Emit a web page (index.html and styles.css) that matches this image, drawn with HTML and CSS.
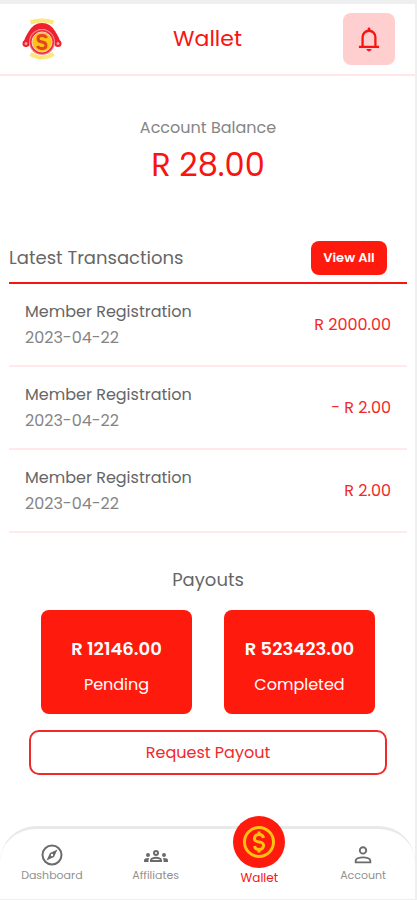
FILE: index.html
```html
<!DOCTYPE html>
<html lang="en">
<head>
<meta charset="utf-8">
<meta name="viewport" content="width=device-width, initial-scale=1">
<title>Wallet</title>
<link rel="stylesheet" href="styles.css">
</head>
<body>
<div class="app">
  <header class="topbar">
    <svg class="logo" viewBox="0 0 40 44" aria-hidden="true">
      <path d="M8.500 5.500q11.500-4 23 0M8.500 37q11.500 7 23 0" fill="none" stroke="#fbe77c" stroke-width="4"/>
      <path d="M4 27Q6 21 9 16.500Q13 9 20 9T31 16.500Q34 21 36 27" fill="none" stroke="#f0202e" stroke-width="6"/>
      <circle cx="4" cy="26.500" r="2.500" fill="#f9a0a8" stroke="#f0202e" stroke-width="2"/>
      <circle cx="36" cy="26.500" r="2.500" fill="#f9a0a8" stroke="#f0202e" stroke-width="2"/>
      <circle cx="20" cy="25" r="13" fill="#f58a90"/>
      <circle cx="20" cy="25" r="12" fill="#f0303a"/>
      <circle cx="20" cy="25" r="10" fill="#ffc414" stroke="#ffd0c4" stroke-width="1"/>
      <path d="M24.500 21q-1-2.500-4.500-2.500q-4 0-4 3t4 3.500t4 3.500t-4 3q-3.500 0-4.500-2.500" fill="none" stroke="#e2481c" stroke-width="3"/>
    </svg>
    <h1 class="title">Wallet</h1>
    <button class="bell" type="button" aria-label="Notifications">
      <svg viewBox="0 0 24 28" aria-hidden="true">
        <path d="M5 22V12a7 7 0 0 1 14 0v10M1 22.500h22" fill="none" stroke="#f81410" stroke-width="2.500"/>
        <path d="M10.500 4.500V3a1.500 1.500 0 0 1 3 0v1.500zM9 25h6q-1 2.500-3 2.500T9 25z" fill="#f81410"/>
      </svg>
    </button>
  </header>

  <main class="content">
    <section class="balance">
      <p class="balance-label">Account Balance</p>
      <p class="balance-value">R 28.00</p>
    </section>

    <section class="transactions">
      <div class="section-head">
        <h2 class="heading">Latest Transactions</h2>
        <button class="view-all" type="button">View All</button>
      </div>
      <ul class="list">
        <li class="row"><div><p class="name">Member Registration</p><p class="date">2023-04-22</p></div><span class="amount">R 2000.00</span></li>
        <li class="row"><div><p class="name">Member Registration</p><p class="date">2023-04-22</p></div><span class="amount">- R 2.00</span></li>
        <li class="row"><div><p class="name">Member Registration</p><p class="date">2023-04-22</p></div><span class="amount">R 2.00</span></li>
      </ul>
    </section>

    <section class="payouts">
      <h2 class="heading">Payouts</h2>
      <div class="cards">
        <div class="card"><strong class="sum">R 12146.00</strong><span class="state">Pending</span></div>
        <div class="card"><strong class="sum">R 523423.00</strong><span class="state">Completed</span></div>
      </div>
      <button class="request" type="button">Request Payout</button>
    </section>
  </main>

  <nav class="tabs">
    <a class="tab" href="#dashboard">
      <svg class="tab-icon" viewBox="1 1 22 22" aria-hidden="true"><circle cx="12" cy="12" r="9.500" fill="none" stroke="#6b6b6b" stroke-width="2"/><path fill="#6b6b6b" fill-rule="evenodd" d="M17.500 6.500l-3.500 7.500-7.500 3.500 3.500-7.500zM12 10.800a1.200 1.200 0 1 0 0 2.400 1.200 1.200 0 0 0 0-2.400z"/></svg>
      Dashboard
    </a>
    <a class="tab" href="#affiliates">
      <svg class="tab-icon tab-icon-wide" viewBox="0 0 24 22" aria-hidden="true"><path fill="#6b6b6b" d="M4 13a2 2 0 1 0 0-4 2 2 0 0 0 0 4zm1.130 1.100A7 7 0 0 0 4 14c-.99 0-1.930.210-2.780.580A2.010 2.010 0 0 0 0 16.430V18h4.500v-1.610c0-.83.230-1.610.630-2.290zM20 13a2 2 0 1 0 0-4 2 2 0 0 0 0 4zm4 3.430c0-.81-.48-1.530-1.220-1.850A6.950 6.950 0 0 0 20 14c-.39 0-.76.040-1.130.100.400.680.630 1.460.630 2.290V18H24zM16.240 13.650A10.500 10.500 0 0 0 12 12.750c-1.630 0-3.070.390-4.240.900A2.990 2.990 0 0 0 6 16.390V18h12v-1.610c0-1.180-.68-2.260-1.760-2.740zM8.070 16c.130-.52.470-.6.930-.77a8.500 8.500 0 0 1 6 0c.460.170.800.250.930.770zM12 6a3 3 0 1 0 0 6 3 3 0 0 0 0-6zm0 4a1 1 0 1 1 0-2 1 1 0 0 1 0 2z"/></svg>
      Affiliates
    </a>
    <a class="tab tab-active" href="#wallet" aria-current="page">
      <span class="coin">
        <svg viewBox="0 0 34 34" aria-hidden="true"><g fill="none" stroke="#ffc20e" stroke-width="3"><circle cx="17" cy="17" r="14.500"/><path d="M21.500 13q-.5-3.500-4.500-3.500T12.500 13t4.500 4t4.500 4t-4.500 3.500T12.500 21M17 6.500v3M17 24.500v3"/></g></svg>
      </span>
      Wallet
    </a>
    <a class="tab" href="#account">
      <svg class="tab-icon" viewBox="0 0 24 24" aria-hidden="true"><g fill="none" stroke="#6b6b6b" stroke-width="2"><circle cx="12" cy="7" r="3.500"/><path d="M4 20v-1.500c0-3 5-4 8-4s8 1 8 4V20z"/></g></svg>
      Account
    </a>
  </nav>
</div>
</body>
</html>
```
FILE: styles.css
```css
* { box-sizing: border-box; }
body, h1, h2, p, ul { margin: 0; padding: 0; }
body {
  font-family: Poppins, Inter, sans-serif;
  font-size: 16px;
  line-height: 26px;
  color: #666;
  background: #fff;
}
button { font: inherit; cursor: pointer; }
a { text-decoration: none; color: inherit; }

.app {
  min-height: 100vh;
  display: flex;
  flex-direction: column;
  border-top: 4px solid #efefef;
  border-right: 2px solid #efefef;
  border-bottom: 2px solid #efefef;
}

.topbar {
  display: grid;
  grid-template-columns: 52px 1fr 52px;
  align-items: center;
  height: 72px;
  padding: 0 20px;
  border-bottom: 2px solid #ffe6e8;
}
.logo { width: 40px; height: 44px; margin-left: 2px; }
.title {
  font-size: 22px;
  font-weight: 400;
  text-align: center;
  color: #f81410;
}
.bell {
  display: grid;
  place-items: center;
  width: 52px;
  height: 52px;
  padding: 0;
  border: 0;
  border-radius: 8px;
  background: #ffcfcf;
}
.bell svg { width: 22px; height: 26px; }

.content { flex: 1; padding: 0 8px 0 9px; }

.balance { padding: 39px 0 56px; text-align: center; }
.balance-label { color: #858585; }
.balance-value {
  margin-top: 4px;
  font-size: 32px;
  line-height: 40px;
  color: #f81410;
}

.heading { font-size: 18px; font-weight: 400; }
.section-head {
  display: flex;
  justify-content: space-between;
  align-items: center;
  padding: 0 20px 7px 0;
  border-bottom: 2px solid #f81410;
}
.view-all {
  width: 76px;
  height: 34px;
  padding: 0;
  border: 0;
  border-radius: 8px;
  background: #ff1a0e;
  color: #fff;
  font-size: 13px;
  font-weight: 600;
}

.list { list-style: none; }
.row {
  display: flex;
  justify-content: space-between;
  align-items: center;
  height: 83px;
  padding: 0 16px;
  border-bottom: 2px solid #ffe9eb;
}
.date { color: #858585; }
.amount { color: #f02a2a; }

.payouts {
  display: flex;
  flex-direction: column;
  padding: 34px 20px 51px;
  text-align: center;
}
.cards {
  display: grid;
  grid-template-columns: 1fr 1fr;
  gap: 32px;
  margin: 17px 12px 16px;
}
.card {
  display: flex;
  flex-direction: column;
  gap: 10px;
  padding: 26px 0 16px;
  border-radius: 8px;
  background: #ff1a0e;
  color: #fff;
}
.sum { font-size: 18px; font-weight: 600; }
.request {
  height: 45px;
  border: 2px solid #f02a2a;
  border-radius: 10px;
  background: #fff;
  color: #f02a2a;
}

.tabs {
  display: grid;
  grid-template-columns: repeat(4, 1fr);
  height: 73px;
  border-top: 3px solid #e9e9e9;
  border-radius: 36px 36px 0 0;
}
.tab {
  display: flex;
  flex-direction: column;
  align-items: center;
  padding-top: 15px;
  font-size: 11px;
  line-height: 16px;
  color: #909090;
}
.tab-icon { width: 22px; height: 22px; margin-bottom: 1px; }
.tab-icon-wide { width: 24px; }
.tab-active { padding-top: 0; margin-top: -13px; font-size: 12px; color: #f81410; }
.coin {
  display: grid;
  place-items: center;
  width: 52px;
  height: 52px;
  margin-bottom: 2px;
  border-radius: 50%;
  background: #ff1a0e;
}
.coin svg { width: 34px; height: 34px; }
```
